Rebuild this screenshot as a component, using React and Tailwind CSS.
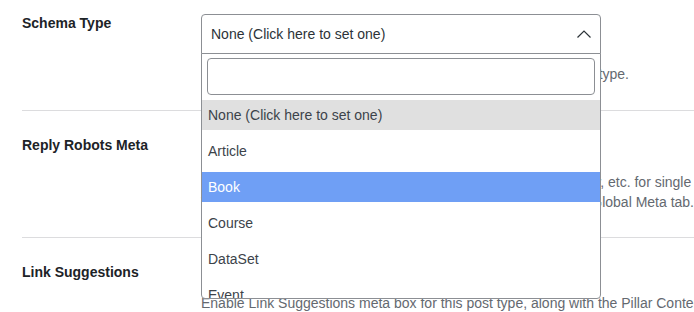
import React from 'react';

const options = ['None (Click here to set one)', 'Article', 'Book', 'Course', 'DataSet', 'Event', 'FAQ'];

function SchemaSelect() {
  return (
    <div className="relative w-[400px]">
      {/* closed select header */}
      <div className="h-[40px] rounded-t-[4px] border border-[#8c8f94] bg-white flex items-center justify-between pl-[9px] pr-[8px] text-[14px] text-[#2c3338]">
        <span>None (Click here to set one)</span>
        <svg width="16" height="10" viewBox="0 0 16 10" fill="none" stroke="#2c3338" strokeWidth="1.2">
          <polyline points="1.5,8.5 8,2 14.5,8.5" />
        </svg>
      </div>

      {/* open dropdown */}
      <div className="absolute left-0 top-[39px] w-[400px] h-[246px] border border-[#8c8f94] rounded-b-[4px] bg-white overflow-hidden z-10">
        <div className="px-[5px] pt-[4px] pb-[5px]">
          <div className="h-[37px] rounded-[4px] border border-[#8c8f94] bg-white"></div>
        </div>
        <ul className="text-[14px] text-[#3c434a]">
          {options.map((o) => (
            <li
              key={o}
              className={
                'h-[30px] mb-[6px] flex items-center pl-[6px] ' +
                (o === 'Book' ? 'bg-[#6f9ff5] text-white' : o.startsWith('None') ? 'bg-[#e0e0e0]' : '')
              }
            >
              {o}
            </li>
          ))}
        </ul>
      </div>
    </div>
  );
}

export default function App() {
  return (
    <div className="w-[694px] h-[312px] overflow-hidden bg-white" style={{ fontFamily: '"Liberation Sans", Arial, sans-serif' }}>
      <div className="w-[1100px] pl-[22px]">
        {/* Schema Type */}
        <div className="flex border-b border-[#dcdcde] pt-[14px] pb-[26px]">
          <div className="w-[179px] text-[14px] leading-[18px] font-semibold text-[#1d2327]">Schema Type</div>
          <div>
            <SchemaSelect />
            <p className="mt-[10px] text-[14px] leading-[20px] text-[#646970] whitespace-nowrap">
              Default rich snippet selected when creating a new Reply for this type.
            </p>
          </div>
        </div>

        {/* Reply Robots Meta */}
        <div className="flex border-b border-[#dcdcde] pt-[25px] pb-[25px]">
          <div className="w-[179px] text-[14px] leading-[18px] font-semibold text-[#1d2327]">Reply Robots Meta</div>
          <div>
            <div className="h-[36px]"></div>
            <p className="text-[14px] leading-[20px] text-[#646970] whitespace-nowrap">
              Custom values for robots meta tag on Replies, noindex, nofollow, etc. for single Reply pages.
              <br />
              These values override the default values in the Titles &amp; Meta &gt; Global Meta tab.
            </p>
          </div>
        </div>

        {/* Link Suggestions */}
        <div className="flex pt-[25px]">
          <div className="w-[179px] text-[14px] leading-[18px] font-semibold text-[#1d2327]">Link Suggestions</div>
          <div>
            <div className="h-[30px]"></div>
            <p className="text-[14px] leading-[20px] text-[#646970] whitespace-nowrap">
              Enable Link Suggestions meta box for this post type, along with the Pillar Content feature.
            </p>
          </div>
        </div>
      </div>
    </div>
  );
}
